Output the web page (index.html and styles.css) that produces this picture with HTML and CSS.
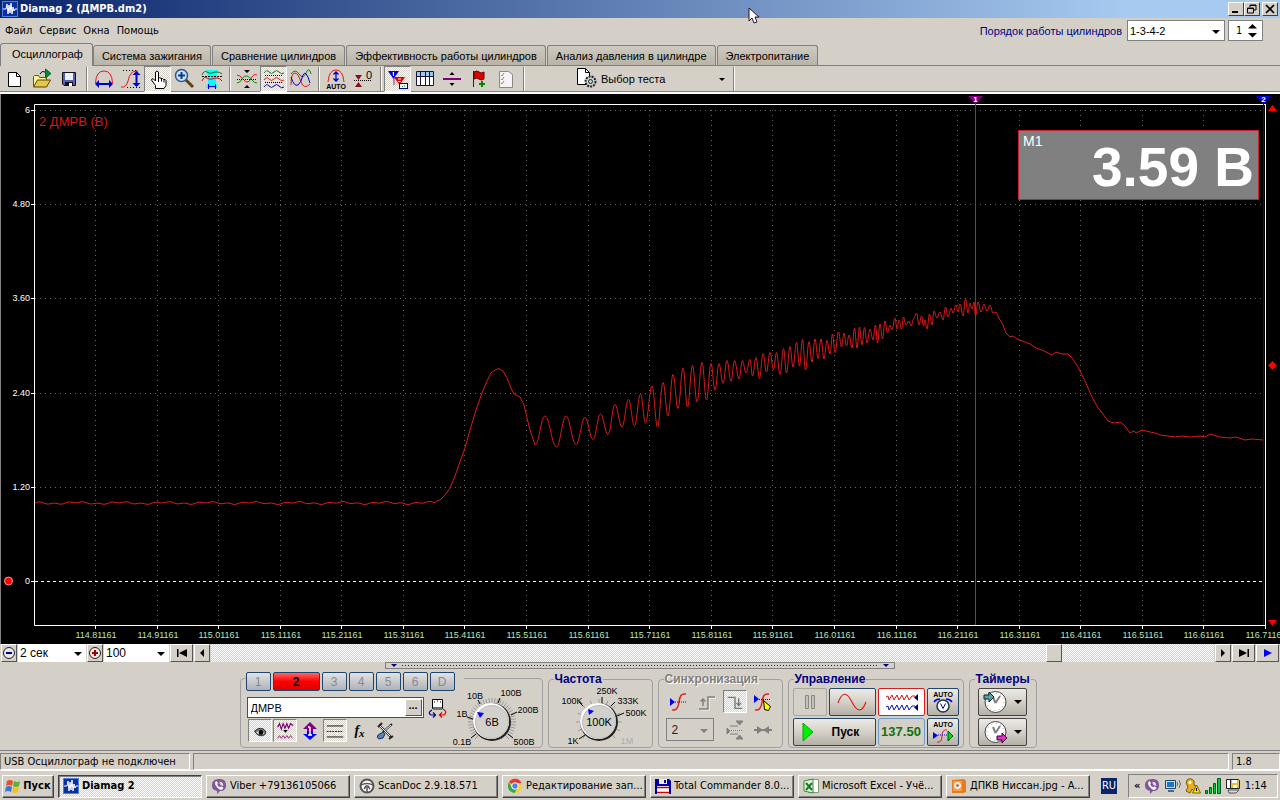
FILE: index.html
```html
<!DOCTYPE html>
<html lang="ru">
<head>
<meta charset="utf-8">
<title>Diamag 2 (ДМРВ.dm2)</title>
<link rel="stylesheet" href="styles.css">
</head>
<body>
<svg class="defs" aria-hidden="true">
  <symbol id="app" viewBox="0 0 16 16"><rect width="16" height="16" fill="#0a2fa0"/><rect x=".5" y=".5" width="15" height="15" fill="none" stroke="#4f7fe0"/><path d="M1 8h3l1-5 1 10 1-9 1 8 1-10 1 11 1-7 1 4 1-2h2" fill="none" stroke="#fff"/></symbol>
  <symbol id="viber" viewBox="0 0 16 16"><path d="M8 1c5 0 7 2 7 6s-2 6-6 6l-3 3v-3C2 12 1 10 1 7s2-6 7-6z" fill="#7d569c"/><path d="M4.500 4c1-1 2 0 2 1.500l-.5 1q1 2.500 3 3l1-.7q2 0 2 1.500c-1 2-3 1.500-5-.3S4 6 4.500 4zM8.500 4q3.500 0 3.500 4M8.500 5.500q2 .2 2 2" fill="#fff" stroke="#fff" stroke-width=".6"/></symbol>
  <symbol id="clock" viewBox="0 0 26 24"><circle cx="12.500" cy="12" r="10.500" fill="#fff" stroke="#444"/><circle cx="12.500" cy="12" r="8.500" fill="none" stroke="#999" stroke-dasharray="1 3.450"/><path d="M12.500 13L17 6M12.500 13L10 7" fill="none" stroke="#808080" stroke-width="2"/></symbol>
</svg>
<div class="app">
  <header class="title">
    <svg width="16" height="16"><use href="#app"/></svg>
    <h1>Diamag 2 (ДМРВ.dm2)</h1>
    <div class="winbtns">
      <button aria-label="Свернуть"><svg viewBox="0 0 12 10"><path d="M2 8h6" stroke="#000" stroke-width="2"/></svg></button><button aria-label="Восстановить"><svg viewBox="0 0 12 10"><path d="M4 3V1h6v5H8M4 1.500h6" fill="none" stroke="#000"/><path d="M1.500 4h6v5h-6zM1 4.500h7" fill="none" stroke="#000"/></svg></button><button class="close" aria-label="Закрыть"><svg viewBox="0 0 12 10"><path d="M2 1l8 8M10 1L2 9" stroke="#000" stroke-width="1.700"/></svg></button>
    </div>
    <svg class="cursor" viewBox="0 0 12 17"><path d="M1 1v13l3-3 2 5 3-1-2-5h4z" fill="#fff" stroke="#2a1030"/></svg>
  </header>
  <div class="menubar">
    <nav><a href="#">Файл</a><a href="#">Сервис</a><a href="#">Окна</a><a href="#">Помощь</a></nav>
    <label class="order" for="order">Порядок работы цилиндров</label>
    <span class="pick ordersel"><select id="order"><option>1-3-4-2</option></select></span>
    <span class="spin"><input aria-label="Цилиндр" value="1"><svg viewBox="0 0 9 14"><path d="M0 4.500L4.500 0 9 4.500zM0 9h9L4.500 13.500z"/></svg></span>
  </div>
  <div class="tabs">
    <button class="on">Осциллограф</button><button>Система зажигания</button><button>Сравнение цилиндров</button><button>Эффективность работы цилиндров</button><button>Анализ давления в цилиндре</button><button>Электропитание</button>
  </div>
  <div class="toolbar">
    <button aria-label="Новый"><svg viewBox="0 0 24 24"><path d="M5.500 5.500h8l4 4v10h-12z" fill="#fff" stroke="#000"/><path d="M13.500 5.500v4h4" fill="none" stroke="#000"/></svg></button>
    <button aria-label="Открыть"><svg viewBox="0 0 24 24"><path d="M3.500 19V9.500l1-1h4l1 2h7v3" fill="#fff79a" stroke="#665800"/><path d="M3.500 20l4-7h13l-4 7z" fill="#e6c646" stroke="#554400"/><path d="M10 7q2-4 5-2" fill="none" stroke="#000"/><path d="M15.500 2l5.500 4.500-5.500 4.500z" fill="#078c2b" stroke="#063"/></svg></button>
    <button aria-label="Сохранить"><svg viewBox="0 0 24 24"><path d="M5.500 5.500h13v13H7l-1.500-1.500z" fill="#5662b0" stroke="#111"/><path d="M8 6h8v7H8z" fill="#e8f0fa"/><path d="M8 15h8v4H8z" fill="#111"/><path d="M12 16h3v3h-3z" fill="#fff"/></svg></button>
    <i class="sep"></i>
    <button aria-label="Развёртка"><svg viewBox="0 0 24 24"><path d="M3.500 16Q4 4 12 4t8.500 12" fill="none" stroke="#e01818"/><path d="M5 17h14" stroke="#00c" stroke-width="2"/><path d="M3 17l4-4v8zM21 17l-4-4v8z" fill="#00c"/></svg></button>
    <button aria-label="Усиление"><svg viewBox="0 0 24 24"><path d="M2 20q5 1 7-6 2-10 8-10h2" fill="none" stroke="#e01818"/><path d="M4 3.500h15M8 20.500h14" stroke="#000" stroke-dasharray="1 2"/><path d="M17.500 6v13" stroke="#00c" stroke-width="2"/><path d="M17.500 4l4 4h-8zM17.500 20l4-4h-8z" fill="#00c"/></svg></button>
    <button class="down" aria-label="Рука"><svg viewBox="0 0 24 24"><path d="M9.500 21.500v-3l-4-5.500q0-2 2-1l2 2v-9q1.500-2 3 0v6q1.500-1 2.500.5 2-.5 2.500 1 2-.5 2.500 1v5l-2 3z" fill="#fff" stroke="#000"/><path d="M12.500 11v4M15.500 11.500v3M18 12.500v3" stroke="#000"/></svg></button>
    <button aria-label="Масштаб"><svg viewBox="0 0 24 24"><circle cx="8.500" cy="8.500" r="6" fill="#c8e4ff" stroke="#2b5590" stroke-width="1.500"/><path d="M5 8.500h7M8.500 5v7" stroke="#0b3b85" stroke-width="2"/><path d="M13 13l7 7" stroke="#5a4510" stroke-width="3"/></svg></button>
    <button aria-label="Автоподбор"><svg viewBox="0 0 24 24"><path d="M6 3h12l-2 7v6l2 5H6l2-5v-6z" fill="#0ff"/><path d="M2 8q2-5 5-3t5 1 5-1 5 2" fill="none" stroke="#0a820a"/><path d="M2 14q2-5 5-3t5 1 5-1 5 3" fill="none" stroke="#d00"/><path d="M2 9.500h20" stroke="#000" stroke-dasharray="2 1"/><path d="M8 19.500h8M8.500 17v5M15.500 17v5" stroke="#00c"/></svg></button>
    <i class="sep"></i>
    <button aria-label="Совместить"><svg viewBox="0 0 24 24"><path d="M2 8q3 0 6 4t5 3 4-5 5-2" fill="none" stroke="#e01818"/><path d="M2 16q3 0 5-4t5-3 5 4 5 3" fill="none" stroke="#148014"/><path d="M2 12.500h20" stroke="#000" stroke-dasharray="1 1"/><path d="M9 3h6l-3 3zM9 21h6l-3-3z"/></svg></button>
    <button class="down" aria-label="Разнести"><svg viewBox="0 0 24 24"><g fill="none"><path d="M2 6q2.500-4 5-1t5 0 5 0 5 1" stroke="#148014"/><path d="M2 13q2.500-4 5-1t5 0 5 0 5 1" stroke="#e01818"/><path d="M2 20q2.500-4 5-1t5 0 5 0 5 1" stroke="#00c"/><path d="M3 8.500h18M3 15.500h18" stroke="#000" stroke-dasharray="1 1"/></g></svg></button>
    <button aria-label="Наложить"><svg viewBox="0 0 24 24"><g fill="none"><path d="M2 7q4-6 8 0t7-1 5 1" stroke="#148014"/><path d="M2 18q0-12 4-12 3 0 6 9 3 8 9 2" stroke="#e01818"/><path d="M2 10q3 10 7 8 3-2 5-10 3-6 7 8" stroke="#00c"/></g></svg></button>
    <i class="sep"></i>
    <button aria-label="Автомасштаб"><svg viewBox="0 0 24 24"><path d="M4 15Q5 3 12 3t8 12" fill="none" stroke="#e01818"/><path d="M12 5v9M9.500 7.500L12 5l2.500 2.500M9.500 11.500L12 14l2.500-2.500" fill="none" stroke="#00c" stroke-width="1.300"/><text x="12" y="22" class="t7">AUTO</text></svg></button>
    <button aria-label="Установить ноль"><svg viewBox="0 0 24 24"><path d="M4 8h7l-3.500 5zM4 20h7l-3.500-5z" fill="#8b0e1a"/><path d="M3 13.500h18" stroke="#000" stroke-dasharray="1 1"/><text x="18" y="12" class="t11">0</text></svg></button>
    <i class="sep"></i>
    <button class="down" aria-label="Маркеры"><svg viewBox="0 0 24 24"><path d="M8 10h11l-5.500 8z" fill="#e00000"/><path d="M2 4h11l-5.500 8z" fill="#0000d0"/><path d="M7.500 5v4M6.500 6h1M12 12h3M12 14.500h3" stroke="#fff"/><path d="M8 10v8M14 18v3" stroke="#a02060"/><rect x="13.500" y="16.500" width="8" height="5" fill="#fff" stroke="#00008b"/><path d="M16 19.500h1M18 19h1" stroke="#080"/></svg></button>
    <button aria-label="Таблица"><svg viewBox="0 0 24 24"><path d="M3.500 4.500h17v14h-17z" fill="#fff" stroke="#151540"/><path d="M4 5h16v4H4z" fill="#9fc5e8"/><path d="M4 9.500h16M7.500 5v13M12.500 5v13M16.500 5v13" stroke="#151540"/></svg></button>
    <button aria-label="Уровень"><svg viewBox="0 0 24 24"><path d="M3 12h18" stroke="#800080" stroke-width="2"/><path d="M9.500 8h5L12 5zM9.500 16h5L12 19z"/></svg></button>
    <button aria-label="Добавить метку"><svg viewBox="0 0 24 24"><path d="M6.500 4v16" stroke="#222"/><path d="M7 5q3-2 5 0t5 0v7q-3 2-5 0t-5 0z" fill="#e00000" stroke="#600"/><path d="M12 17h6M15 14v6" stroke="#080" stroke-width="2"/></svg></button>
    <button aria-label="Отчёт"><svg viewBox="0 0 24 24"><path d="M5.500 4.500h9l4 3v13h-13z" fill="#f4f4f4" stroke="#888"/><path d="M7 8l1 1 2-3M7 12l1 1 2-3M7 16l1 1 2-3" fill="none" stroke="#888"/></svg></button>
    <i class="sep"></i>
    <button class="test"><svg viewBox="0 0 24 24"><path d="M1.500 1.500h8l4 4v12h-12z" fill="#fff" stroke="#000"/><path d="M9.500 1.500v4h4" fill="none" stroke="#000"/><circle cx="14.500" cy="14.500" r="5" fill="#d4d0c8" stroke="#223" stroke-width="2" stroke-dasharray="2 1"/><circle cx="14.500" cy="14.500" r="2" fill="none" stroke="#033"/></svg><span>Выбор теста</span><b class="arr"></b></button>
    <i class="sep"></i>
  </div>

  <svg class="chart" viewBox="0 94 1280 550" role="img" aria-label="2 ДМРВ (В)">
    <rect y="94" width="1280" height="550"/>
    <path d="M.5 94V644" stroke="#808080"/>
    <g id="grid" stroke="#666" stroke-dasharray="1 4"></g>
    <path d="M35 581.500H1265" stroke="#fff" stroke-dasharray="3 3"/>
    <path d="M1265.500 104V626M1265 104.500H34.500V625.500H1265" fill="none" stroke="#fff"/>
    <path id="signal" fill="none" stroke="#dc1a1a"/>
    <path d="M975.500 100V625" stroke="#8c2494"/>
    <path d="M1263.500 100V625" stroke="#0000f0"/>
    <path d="M968 96h15l-7.500 8z" fill="#800080"/><path d="M1256 96h15l-7.500 8z" fill="#0000e0"/>
    <text x="975.500" y="102" class="mk">1</text><text x="1263.500" y="102" class="mk">2</text>
    <path d="M1268 111h9l-4.500-6zM1268 620h9l-4.500 6zM1272.500 361l4.500 4.500-4.500 4.500-4.500-4.500z" fill="#f00"/>
    <circle cx="8.500" cy="581" r="4" fill="#f00" stroke="#f99"/>
    <text x="39" y="126" class="sig">2 ДМРВ (В)</text>
    <g id="labels"></g>
    <rect x="1018.500" y="130.500" width="240" height="69" fill="#808080" stroke="#c8202c"/>
    <text x="1023" y="146" class="m1">M1</text>
    <text x="1254" y="186" class="big">3.59 В</text>
  </svg>

  <div class="timebar">
    <button aria-label="Уменьшить"><svg viewBox="0 0 16 16"><circle cx="8" cy="8" r="5.500" fill="#e8e8f0" stroke="#222"/><path d="M5 8h6" stroke="#00007b" stroke-width="2"/></svg></button>
    <span class="pick w68"><select aria-label="Развёртка"><option>2 сек</option></select></span>
    <button aria-label="Увеличить"><svg viewBox="0 0 16 16"><circle cx="8" cy="8" r="5.500" fill="#f6e4e4" stroke="#222"/><path d="M5 8h6M8 5v6" stroke="#a00000" stroke-width="2"/></svg></button>
    <span class="pick w64"><select aria-label="Масштаб"><option>100</option></select></span>
    <button class="wide" aria-label="В начало"><svg viewBox="0 0 16 16"><path d="M3 4h1.500v8H3zM13 4v8L5 8z"/></svg></button>
    <button aria-label="Влево"><svg viewBox="0 0 16 16"><path d="M10 4v8L6 8z"/></svg></button>
    <input type="range" min="0" max="1000" value="846" aria-label="Прокрутка">
    <button aria-label="Вправо"><svg viewBox="0 0 16 16"><path d="M6 4v8l4-4z"/></svg></button>
    <button class="wide" aria-label="В конец"><svg viewBox="0 0 16 16"><path d="M11.500 4H13v8h-1.500zM3 4v8l8-4z"/></svg></button>
    <button class="wide" aria-label="Воспроизвести"><svg viewBox="0 0 16 16"><path d="M4 4v8l8-4z" fill="#00f"/></svg></button>
  </div>
  <div class="splitter"><b></b><i></i><b></b></div>

  <main class="panel">
    <section class="channel">
      <div class="chans"><button>1</button><button class="act">2</button><button>3</button><button>4</button><button>5</button><button>6</button><button>D</button></div>
      <div class="chanbody">
        <div>
          <div class="namerow"><span class="name"><input aria-label="Имя канала" value="ДМРВ"><button aria-label="Выбрать">...</button></span>
          <svg width="22" height="20" viewBox="0 0 22 20"><path d="M5.500 1.500h10v9h-10z" fill="#fff" stroke="#000"/><path d="M6 9h9v3H6z" fill="#687868"/><path d="M7 4h1M10 3h1M13 4h1" stroke="#000"/><path d="M5 12q-5 3-1 5h4M6 14.500L8.500 17 6 19.500" fill="none" stroke="#008" stroke-width="1.200"/><path d="M16 11q5 3 1 6h-4M15 14.500L12.500 17l2.500 2.500" fill="none" stroke="#d00" stroke-width="1.200"/></svg></div>
          <div class="tools">
            <button class="down" aria-label="Показать"><svg viewBox="0 0 24 24"><path d="M6 12q7-6 12 0 1 4-3 5-6 1-9-5z" fill="#777" stroke="#222"/><path d="M8 13.500q4-3 9 1-5 2-9-1z" fill="#fff"/><circle cx="13" cy="13.500" r="2.500"/></svg></button>
            <button class="down" aria-label="Фильтр"><svg viewBox="0 0 24 24"><path d="M4 8l2-4 2 6 2-6 2 5 2-5 2 5 2-5 3 2" fill="none" stroke="#800080" stroke-width="1.300"/><path d="M10 11h5l-2.500 3z"/><path d="M4 20l2-3 2 3 2-3 2 3 2-3 2 3 2-3 2 3" fill="none" stroke="#a01080"/></svg></button>
            <button aria-label="Смещение"><svg viewBox="0 0 24 24"><path d="M12 3l7 7h-4v3H9v-3H5z" fill="#800080"/><path d="M12 21l7-6h-4v-3H9v3H5z" fill="#00f"/><path d="M12 8v8M10 8h2M10 16h4" stroke="#fff" stroke-width="1.500"/></svg></button>
            <button class="down" aria-label="Линии"><svg viewBox="0 0 24 24"><path d="M3 6.500h18M3 18.500h18" stroke="#000"/><path d="M3 12.500h18" stroke="#000" stroke-dasharray="2 1"/></svg></button>
            <button class="fx" aria-label="Формула">f<small>x</small></button>
            <button aria-label="Настройка"><svg viewBox="0 0 24 24"><path d="M6 6l12 12M19 5l-9 8M5 8l4-4M16 20l4-3" stroke="#222" stroke-width="2"/><path d="M7 7l10 10M18 6l-7 6" stroke="#fff"/><path d="M10 13l-5 3q-2 3 1 4l4-1 2-4z" fill="#5b83b8" stroke="#235"/></svg></button>
          </div>
        </div>
        <svg class="dial" width="90" height="64" viewBox="452 684 90 64"><g class="ticks" data-c="494,722,19,24,7.5"></g><circle cx="494" cy="722" r="19" fill="#222"/><circle cx="493" cy="721" r="18" fill="#fff"/><circle cx="494" cy="722" r="16.500" class="knob"/><path d="M479 712l7 1-4 5z" fill="#00f"/><path d="M482 704l-2-4M500 703l2-5M513 715l6-3M475 719l-6-2M478 734l-5 4M510 734l5 4" stroke="#000"/><text class="kv" x="494" y="726">6В</text><g class="kl"><text x="477" y="699">10В</text><text x="513" y="696">100В</text><text x="530" y="713">200В</text><text x="464" y="717">1В</text><text x="464" y="745">0.1В</text><text x="526" y="745">500В</text></g></svg>
      </div>
    </section>
    <fieldset class="freq"><legend>Частота</legend>
      <svg width="96" height="64" viewBox="552 684 96 64"><g class="ticks" data-c="598,722,19,23,22.5"></g><circle cx="598" cy="722" r="19" fill="#222"/><circle cx="597" cy="721" r="18" fill="#fff"/><circle cx="598" cy="722" r="16.500" class="knob"/><path d="M587 709l6 2-5 4z" fill="#00f"/><path d="M601 703v-6M582 706l-4-4M610 706l4-4M616 716l7-3M584 735l-6 4" stroke="#000"/><text class="kv" x="598" y="726">100K</text><g class="kl"><text x="606" y="694">250K</text><text x="571" y="704">100K</text><text x="627" y="704">333K</text><text x="635" y="716">500K</text><text x="572" y="744">1K</text><text x="626" y="744" fill="#aaa">1M</text></g></svg>
    </fieldset>
    <fieldset class="sync" disabled><legend>Синхронизация</legend>
      <div class="syncgrid">
        <button aria-label="Фронт"><svg viewBox="0 0 24 24"><path d="M5 20q6 1 7-8t6-8h1" fill="none" stroke="#d22" stroke-width="1.500"/><path d="M8 12h12" stroke="#00f" stroke-dasharray="1 1"/><path d="M3 8v8l5-4z" fill="#00f"/></svg></button>
        <button aria-label="Нарастание"><svg viewBox="0 0 24 24"><path d="M5 20h9V8h7" fill="none" stroke="#fff"/><path d="M4 19h9V7h7M8 16V9M5.500 11.500L8 9l2.500 2.500" fill="none" stroke="#808080" stroke-width="1.500"/></svg></button>
        <button class="down" aria-label="Спад"><svg viewBox="0 0 24 24"><path d="M4 7h8v12h8M16 8v8M13.500 13l2.500 3 2.500-3" fill="none" stroke="#777" stroke-width="1.500"/></svg></button>
        <button aria-label="Ручной"><svg viewBox="0 0 24 24"><path d="M4 20q6 1 7-8t6-8h1" fill="none" stroke="#d22" stroke-width="1.500"/><path d="M8 9.500h12" stroke="#00f" stroke-dasharray="1 1"/><path d="M3 5v8l5-4z" fill="#00f"/><path d="M12.500 10.500l7 6-2 4-4-1z" fill="#ff0" stroke="#000"/></svg></button>
        <span class="pick"><select aria-label="Канал синхронизации"><option>2</option></select></span>
        <button aria-label="Уровень"><svg viewBox="0 0 24 24"><path d="M7 8h8M7 16h8M13 3h7l-3.500 4zM13 21h7l-3.500-4zM4 10v6l3-3z" fill="#808080" stroke="#808080"/><path d="M8 12.500h12" stroke="#808080" stroke-dasharray="1 1"/></svg></button>
        <button aria-label="Сжать"><svg viewBox="0 0 24 24"><path d="M3 12h18" stroke="#808080" stroke-width="2"/><path d="M6 8v8l6-4zM18 8v8l-6-4z" fill="#808080"/></svg></button>
      </div>
    </fieldset>
    <fieldset class="ctl"><legend>Управление</legend>
      <div class="ctlgrid">
        <button class="off" disabled aria-label="Пауза"><svg viewBox="0 0 24 24"><path d="M7.500 5.500h3v13h-3zM13.500 5.500h3v13h-3z" fill="#c4c0b8" stroke="#888"/></svg></button>
        <button aria-label="Синус"><svg width="34" height="24" viewBox="0 0 34 24"><path d="M3 13Q9-4 17 12t14 0" fill="none" stroke="#e01818" stroke-width="1.200"/></svg></button>
        <button class="sel" aria-label="Режим записи"><svg width="36" height="24" viewBox="0 0 36 24"><path d="M3 7l2-1 1 4 3-5 2 5 3-5 2 5 3-5 2 5 3-5 2 5 3-4h3" fill="none" stroke="#d11"/><path d="M3 17l2-1 1 4 3-5 2 5 3-5 2 5 3-5 2 5 3-5 2 5 3-4h3" fill="none" stroke="#11c"/><path d="M35 4v7l-4-3.500zM35 14v7l-4-3.500z" fill="#007"/></svg></button>
        <button aria-label="Авто вольты"><svg viewBox="0 0 24 24"><text class="t7" x="12" y="7">AUTO</text><circle cx="12" cy="16" r="6" fill="#fff" stroke="#234" stroke-width="1.500"/><path d="M9.500 13.500l2.500 5 2.500-5" fill="none" stroke="#00c"/><path d="M3 12q2-3 6-3M21 12q-2-3-6-3" fill="none" stroke="#00f" stroke-width="1.500"/></svg></button>
        <button class="start"><svg width="12" height="18" viewBox="0 0 12 18"><path d="M1 0v18l10-9z" fill="#00f000" stroke="#0a0"/></svg><span>Пуск</span></button>
        <output>137.50</output>
        <button aria-label="Авто синхронизация"><svg viewBox="0 0 24 24"><text class="t7" x="12" y="7">AUTO</text><path d="M6 22q5 1 5-6t5-6" fill="none" stroke="#d22"/><path d="M7 15h10" stroke="#00f" stroke-dasharray="1 1"/><path d="M2 12l5 3.500L2 19z" fill="#00f"/><path d="M17 11l5 5-5 5z" fill="#0d0" stroke="#050"/></svg></button>
      </div>
    </fieldset>
    <fieldset class="tim"><legend>Таймеры</legend>
      <button aria-label="Таймер запуска"><svg width="26" height="24" viewBox="0 0 26 24"><use href="#clock"/><path d="M1 5h5V2l5 5-5 5V9H1z" fill="#4fa8a8" stroke="#122"/></svg><b class="arr"></b></button>
      <button aria-label="Таймер остановки"><svg width="26" height="24" viewBox="0 0 26 24"><use href="#clock"/><path d="M14 16h5v-3l5 5-5 5v-3h-5z" fill="#e030c8" stroke="#303"/></svg><b class="arr"></b></button>
    </fieldset>
  </main>

  <div class="status"><span class="s1">USB Осциллограф не подключен</span><span class="s2"></span><span class="s3">1.8</span></div>
  <footer class="taskbar">
    <button class="go"><svg width="17" height="16" viewBox="0 0 17 16"><path d="M2 3q3-2 6 0L7 8Q4 6 1 8z" fill="#e8502a"/><path d="M9 3q3 2 6 0l-1 5q-3 2-6 0z" fill="#5bb22d"/><path d="M1 9q3-2 6 0l-1 5q-3-2-6 0z" fill="#3a74d8"/><path d="M8 9q3 2 6 0l-1 5q-3 2-6 0z" fill="#f4c020"/></svg>Пуск</button>
    <div class="tasks">
      <button class="cur"><svg><use href="#app"/></svg><span>Diamag 2</span></button>
      <button><svg><use href="#viber"/></svg><span>Viber +79136105066</span></button>
      <button><svg viewBox="0 0 16 16"><circle cx="8" cy="8" r="6.500" fill="#fff" stroke="#555" stroke-width="2"/><path d="M2 7q6-3 12 0M8 9v5M5 11l2-3h2l2 3" stroke="#555" stroke-width="1.500" fill="none"/></svg><span>ScanDoc 2.9.18.571</span></button>
      <button><svg viewBox="0 0 16 16"><circle cx="8" cy="8" r="7" fill="#fc3"/><path d="M8 8L2 4.300A7 7 0 0 1 14.500 5H8z" fill="#e33b2e"/><path d="M2 4.300A7 7 0 0 0 7.500 15L11 9.500 8 11 5 10z" fill="#2da94f"/><circle cx="8" cy="8" r="3.300" fill="#4285f4" stroke="#fff"/></svg><span>Редактирование зап...</span></button>
      <button><svg viewBox="0 0 16 16"><path d="M0 1h14l2 2v13H0z" fill="#0000a8"/><path d="M4 1h8v5H4z" fill="#eee"/><path d="M9 2h2v3H9z" fill="#0000a8"/><path d="M2 8h12v8H2z" fill="#fff"/><path d="M2 9.500h12M2 14.500h12" stroke="#c00" stroke-width="1.500"/></svg><span>Total Commander 8.0...</span></button>
      <button><svg viewBox="0 0 16 16"><path d="M5.500 1.500h10v13h-10z" fill="#fff" stroke="#7a9a7a"/><path d="M1 3l9-2v14l-9-2z" fill="#e4f4dc" stroke="#3a8a3a"/><path d="M3 5l6 7M9 5l-6 7" stroke="#1c7a2c" stroke-width="2"/></svg><span>Microsoft Excel - Учё...</span></button>
      <button><svg viewBox="0 0 16 16"><path d="M1 2l12-1 2 2v11l-3 1H1z" fill="#e87a1c"/><path d="M2 3h9v10H2z" fill="#f4a04c"/><circle cx="6.500" cy="7.500" r="3" fill="#f0e0d0" stroke="#fff"/><circle cx="6.500" cy="7.500" r="1.300" fill="#a63"/></svg><span>ДПКВ Ниссан.jpg - A...</span></button>
    </div>
    <span class="lang">RU</span>
    <div class="tray"><span class="chev">«</span>
      <svg><use href="#viber"/></svg>
      <svg viewBox="0 0 16 16"><path d="M.5 2.500h10v8H.5z" fill="#cde" stroke="#246"/><path d="M2 4h7v5H2z" fill="#1c74c8"/><path d="M3 13h6" stroke="#567" stroke-width="2"/><path d="M12 4q1.500 2 0 4M14 2q3 4 0 8" fill="none" stroke="#567"/></svg>
      <svg viewBox="0 0 16 16"><path d="M2 2q4-3 7 1v4l4 2-3 5-3-3-2 4-4-2 2-4Q0 5 2 2z" fill="#e8b020" stroke="#7a5800"/><circle cx="5" cy="4.500" r="1.500" fill="#fff"/><path d="M11.500 7l4 8h-8z" fill="#ffe000" stroke="#760"/><path d="M11.500 10v3" stroke="#000"/></svg>
      <svg viewBox="0 0 16 16"><path d="M.5 12.500h2v3h-2zM4.500 9.500h2v6h-2zM8.500 5.500h2v10h-2zM12.500.5h3v15h-3z" fill="#0c3" stroke="#053"/></svg>
      <svg viewBox="0 0 16 16"><path d="M1.500 1.500h9v9h-9z" fill="#fff" stroke="#222"/><path d="M5.500 1.500h8l1 1v8h-9z" fill="#e8c040" stroke="#222"/><path d="M7 2h5v3H7zM8 7h4v3H8z" fill="#fff"/><path d="M3 12h11l-3 3H4z" fill="#ddd" stroke="#555"/></svg>
      <time>1:14</time>
    </div>
  </footer>
</div>
<script src="chart.js"></script>
</body>
</html>
```

FILE: styles.css
```css
* { box-sizing: border-box; }
:root { --face: #d4d0c8; --check: repeating-conic-gradient(#fff 0 25%, #d4d0c8 0 50%) 0 0 / 2px 2px; --ui: "Liberation Sans", Arial, sans-serif; --tahoma: "DejaVu Sans Condensed", "DejaVu Sans", sans-serif; }
body { margin: 0; background: var(--face); color: #000; font: 11px/14px var(--ui); }
button, input, select, output { font: inherit; color: inherit; }
button { padding: 0; border: 0; background: none; display: flex; align-items: center; justify-content: center; }
a { color: inherit; text-decoration: none; }
.defs { display: none; }
.app { display: flex; flex-direction: column; min-height: 100vh; }

.title { display: flex; align-items: center; gap: 2px; height: 18px; padding: 0 2px; position: relative; color: #fff; background: linear-gradient(90deg, #0a246a, #a6caf0 88%); }
.title h1 { margin: 0; font: bold 11px/16px var(--tahoma); }
.winbtns { display: flex; margin-left: auto; }
.winbtns button { width: 16px; height: 14px; background: var(--face); border: 1px solid; border-color: #fff #404040 #404040 #fff; }
.winbtns svg { width: 12px; height: 10px; }
.winbtns .close { margin-left: 2px; }
.cursor { position: absolute; left: 748px; top: 7px; width: 12px; height: 17px; z-index: 2; }

.menubar { display: flex; align-items: center; height: 25px; padding: 0 17px 0 5px; font: 11px/14px var(--tahoma); }
.menubar nav { display: flex; gap: 7px; flex: 1; }
.order { font: 11px/14px var(--ui); color: #000080; margin-right: 5px; }
.pick { display: flex; position: relative; background: #fff; font: 12px/14px var(--ui); }
.pick select { appearance: none; flex: 1; min-width: 0; border: 0; padding: 0 2px; background: none; border-radius: 0; }
.pick::after { content: ""; position: absolute; right: 4px; top: 50%; border: 4px solid transparent; border-top-color: #000; border-bottom: 0; margin-top: -1px; }
.ordersel { width: 98px; height: 21px; border: 1px solid #808080; margin-right: 3px; }
.ordersel select { font-size: 11px; }
.spin { display: flex; align-items: center; width: 35px; height: 21px; padding: 0 5px; background: #fff; border: 1px solid #808080; }
.spin input { flex: 1; min-width: 0; border: 0; padding: 0 2px; background: none; }
.spin svg { width: 9px; height: 14px; }

.tabs { display: flex; align-items: flex-end; height: 23px; border-bottom: 1px solid #808080; }
.tabs button { height: 20px; padding: 0 8px; margin-right: 1px; border: 1px solid #808080; border-bottom: 0; border-radius: 3px 3px 0 0; background: linear-gradient(#cfcbc2, #b8b3a6); white-space: nowrap; }
.tabs .on { height: 23px; padding: 0 9px 2px 11px; margin: 0 0 -1px; background: var(--face); }

.toolbar { display: flex; align-items: center; height: 28px; padding-left: 1px; border-bottom: 2px solid #fff; box-shadow: inset 0 -1px #808080; }
.toolbar button { width: 27px; height: 26px; }
.toolbar svg, .tools svg, .syncgrid svg { width: 24px; height: 24px; }
.down { background: var(--check); border: 1px solid; border-color: #808080 #fff #fff #808080; }
.sep { width: 8px; height: 24px; background: linear-gradient(90deg, transparent 4px, #808080 4px 5px, #fff 5px 6px, transparent 6px); }
.toolbar .test { width: 202px; padding: 0 4px 0 49px; gap: 1px; justify-content: flex-start; }
.arr { border: 4px solid transparent; border-top-color: #000; border-bottom: 0; }
.test .arr { border-width: 3px; border-bottom: 0; margin-left: auto; }
.t7 { font: bold 7px "Liberation Sans", sans-serif; text-anchor: middle; }
.t11 { font: 11px "Liberation Sans", sans-serif; text-anchor: middle; }

.chart { display: block; width: 100%; font-family: "Liberation Sans", sans-serif; }
.mk { font-size: 8px; font-weight: bold; fill: #fff; text-anchor: middle; }
.sig { font-size: 13px; fill: #d01c1c; }
.m1 { font-size: 14px; fill: #fff; }
.big { font-size: 55px; font-weight: bold; fill: #fff; text-anchor: end; }
.yl { font-size: 9px; fill: #fff; text-anchor: end; }
.xl { font-size: 9px; fill: #b8e4b4; text-anchor: middle; }

.timebar { display: flex; height: 18px; padding: 0 1px; gap: 1px; }
.timebar button { width: 16px; background: var(--face); border: 1px solid; border-color: #fff #555 #555 #fff; }
.timebar svg { width: 16px; height: 16px; flex: none; }
.timebar .wide { width: 23px; }
.w68 { width: 68px; }
.w64 { width: 65px; }
.timebar input { appearance: none; flex: 1; min-width: 0; height: 18px; margin: 0; background: var(--check); }
.timebar input::-webkit-slider-thumb { appearance: none; width: 16px; height: 18px; background: var(--face); border: 1px solid; border-color: #fff #555 #555 #fff; }
.splitter { display: flex; align-items: center; gap: 5px; width: 510px; height: 7px; margin: 0 auto; padding: 0 5px; border: 1px solid #808080; }
.splitter b { border: 3px solid transparent; border-top-color: #000080; border-bottom: 0; }
.splitter i { flex: 1; height: 1px; background: repeating-linear-gradient(90deg, #223 0 1px, transparent 1px 3px); }

.panel { display: flex; justify-content: center; align-items: flex-start; gap: 5px; padding: 3px 4px 0 0; height: 81px; flex: 1; border-bottom: 1px solid #808080; }
fieldset, .channel { margin: 0; border: 1px solid #a0a0a0; border-radius: 4px; }
fieldset { height: 76px; min-width: 0; padding: 0 4px; }
legend { padding: 0 1px; margin-left: 1px; font: bold 12px/14px var(--ui); color: #000080; }
.channel { width: 303px; height: 70px; margin-top: 6px; padding: 0 2px 0 5px; }
.chans { display: flex; gap: 2px; width: 218px; margin-top: -7px; background: var(--face); position: relative; z-index: 1; font-size: 12px; }
.chans button { width: 25px; height: 19px; border: 1px solid #1c4670; border-radius: 2px; color: #868a90; background: linear-gradient(#e2e2e2, #aeb2b8); }
.chans .act { width: 47px; background: linear-gradient(#f66, #f00 50%, #d00); color: #000; font-weight: bold; }
.chanbody { display: flex; justify-content: space-between; }
.dial { margin-top: -7px; }
.namerow { display: flex; align-items: center; gap: 3px; padding: 6px 0 0 1px; }
.name { display: flex; width: 177px; height: 21px; padding: 1px; border: 1px solid #c81818; background: #fff; }
.name input { flex: 1; min-width: 0; border: 0; padding: 0 2px; background: none; }
.name button { width: 17px; padding-bottom: 5px; font-weight: bold; background: var(--face); border: 1px solid; border-color: #fff #555 #555 #fff; }
.tools { display: flex; padding: 1px 0 0 2px; gap: 1px; }
.tools button { width: 24px; height: 23px; }
.fx { font: italic bold 14px/16px "Liberation Serif", serif; }
.fx small { font-size: 11px; padding-top: 4px; }
.knob { fill: #d2d0cb; stroke: #bbb; }
.kv { font-size: 11px; text-anchor: middle; }
.kl { font-size: 9px; text-anchor: middle; }
.ticks { stroke: #999; }
.freq { width: 105px; }
.freq svg { display: block; margin-top: -2px; }
.sync { width: 125px; }
.sync legend { color: #808080; text-shadow: 1px 1px #fff; }
.syncgrid { display: grid; grid-template-columns: repeat(4, 28px); gap: 5px 0; padding: 4px 0 0 2px; }
.syncgrid button { width: 24px; height: 23px; justify-self: center; }
.syncgrid .pick { grid-column: span 2; width: 48px; height: 23px; margin-left: 1px; background: none; border: 1px solid #808080; }
.syncgrid .pick select { padding: 0 5px; opacity: 1; color: #222; }
.syncgrid .pick::after { right: 5px; border-top-color: #808080; }
.ctl { width: 176px; }
.ctlgrid { display: grid; grid-template-columns: 34px 47px 47px 32px; grid-auto-rows: 28px; gap: 2px; padding-top: 2px; }
.ctlgrid button, .tim button { border: 1px solid #234668; border-radius: 2px; background: linear-gradient(#eceae6, #d4d0c8 50%, #b4b0a8); }
.ctlgrid svg { flex: none; }
.ctlgrid button svg:not([width]) { width: 24px; height: 24px; }
.ctlgrid .off { border-color: #aaa69e; background: none; }
.ctlgrid .sel { border-color: #d81c1c; background: #fff; }
.ctlgrid .start { grid-column: span 2; justify-content: flex-start; padding-left: 8px; gap: 18px; font-weight: bold; font-size: 12px; }
.ctlgrid output { display: flex; align-items: center; justify-content: center; border: 1px solid #6d9cc8; border-radius: 3px; font: bold 13px/16px var(--ui); color: #107010; }
.tim { width: 68px; padding: 0 8px; }
.tim legend { margin-left: -3px; }
.tim button { width: 49px; height: 28px; margin-top: 2px; gap: 5px; border-color: #444; }

.status { display: flex; gap: 3px; height: 19px; padding: 2px 0 0; font: 11px/14px var(--tahoma); }
.status span { border: 1px solid; border-color: #808080 #fff #fff #808080; padding: 1px 3px; }
.s1 { width: 190px; white-space: nowrap; }
.s2 { flex: 1; }
.s3 { width: 48px; }
.taskbar { display: flex; align-items: center; gap: 4px; height: 30px; padding: 2px 2px 1px; border-top: 1px solid #fff; font: 11px/14px var(--tahoma); }
.taskbar button { height: 23px; border: 1px solid; border-color: #fff #404040 #404040 #fff; box-shadow: inset -1px -1px #808080; }
.taskbar .go { width: 52px; gap: 1px; font-weight: bold; }
.tasks { display: flex; flex: 1; min-width: 0; gap: 4px; }
.tasks button { flex: 1; min-width: 0; padding: 0 1px 0 4px; gap: 3px; justify-content: flex-start; white-space: nowrap; }
.tasks span { overflow: hidden; }
.tasks svg, .tray svg { width: 16px; height: 16px; flex: none; }
.taskbar .cur { background: var(--check); border-color: #404040 #fff #fff #404040; box-shadow: inset 1px 1px #808080; font-weight: bold; }
.lang { margin: 0 7px 0 7px; padding: 1px; background: #0a246a; color: #fff; }
.tray { display: flex; align-items: center; justify-content: space-between; width: 150px; height: 24px; padding: 0 10px 0 5px; border: 1px solid; border-color: #808080 #fff #fff #808080; }
.chev { font-weight: bold; }
```

FILE: chart.js
```js
const NS = 'http://www.w3.org/2000/svg';
function add(parent, tag, attrs, text) {
  const el = document.createElementNS(NS, tag);
  for (const k in attrs) el.setAttribute(k, attrs[k]);
  if (text) el.textContent = text;
  parent.appendChild(el);
}

const grid = document.getElementById('grid');
const labels = document.getElementById('labels');
[['6', 110], ['4.80', 204], ['3.60', 298], ['2.40', 393], ['1.20', 487], ['0', 581]].forEach(([t, y]) => {
  if (t !== '0') add(grid, 'path', { d: `M35 ${y + 0.5}H1265` });
  add(labels, 'path', { d: `M31 ${y + 0.5}h4`, stroke: '#fff' });
  add(labels, 'text', { x: 30, y: y + 3, class: 'yl' }, t);
});
for (let i = 0; i < 20; i++) {
  const x = Math.round(95 + i * 61.58);
  add(grid, 'path', { d: `M${x + 0.5} 110V625` });
  add(labels, 'path', { d: `M${x + 0.5} 625v4`, stroke: '#fff' });
  add(labels, 'text', { x: x + 1, y: 638, class: 'xl' }, (114.81161 + i * 0.1).toFixed(5));
}

// Idle level, then the rising edge of the first pulse.
let d = 'M35 503';
for (let x = 37; x < 436; x += 2) {
  d += `L${x} ${(503 + Math.sin(x / 7) * 0.8 + Math.sin(x / 2.3) * 0.7).toFixed(1)}`;
}
[436,501.5,440,500,445,495,450,488,455,476,462,456,465,448,470,430,476,410,482,393,487,381,491,373,495,370,499,368.5,503,371,507,378,511,388,514,394,520,397,524,405,528,422,530,430]
  .forEach((v, i) => { d += i % 2 ? ` ${v}` : `L${v}`; });

// Alternating troughs and peaks of the oscillation.
const ext = [535,445,545,416,556.5,447,566,416,576,444.5,585,417.5,593,439.5,600.5,414,608,434.5,615,404.5,622,427,628.5,399.5,634.5,426,640.5,394,645.5,423,652,386,657.5,427,663,382.5,668,416,673,374.5,678,408.5,683,368,687.5,407,692.5,365.5,697,402,702,362.5,706.5,400,711,363.5,715,390.5,719,363.5,723,383.5,727,360.5,731,381.5,734.5,360.5,739,379,742.5,360.5,746,373,750,359.5,752.5,376,756,357.5,759.5,378.5,763,353.5,766.5,372,770,352.5,773.5,369.5,776.5,352.5,780,374.5,783.5,348.5,786.5,373,790,346.5,793,367,796.5,342.5,799.5,366,802.5,339.5,805.5,370,809,341.5,812,362,815,339,818,358.5,821,339,824,359,827,340.5,830,354,832.5,334,835,352.5,838.5,332,841.5,347,844,333,846.5,346,849,335,852,348,854.5,328,857,348,859.5,327,862,345,864.5,327.5,867,343,870,329,873,340,875.5,325,877.5,343,880,324,882.5,339,885,321,887.5,333,890,325,892,330,895,318,897,329,899,320,901.5,329,903.5,317,906,325,909,321,911,326,914,318,916.5,313,919,325,921.5,316,923.5,326,925,320,927,329,929.5,314,932,325,934,311,937,318,940,312,943,320,945.5,307,948,317,951,308,953,313,956,305,958,312,960,304,963,316,965.5,299,968,313,970,303,972,309,974,302,975.5,316,978,302,981,312,984,304,987,311,990,305,993,313,996,312];
let px = 530, py = 430;
for (let i = 0; i < ext.length; i += 2) {
  const [x, y] = [ext[i], ext[i + 1]];
  const h = (x - px) * 0.4;
  d += i ? `C${px + h} ${py} ${x - h} ${y} ${x} ${y}` : `L${x} ${y}`;
  px = x; py = y;
}

// Falling edge and settled level.
const tail = [1000,320,1003,325,1006,333,1010,337,1013,336,1017,339,1025,342,1030,344,1036,348,1042,350,1048,353,1052,355,1056,352,1062,354,1068,354,1073,359,1078,367,1085,381,1092,397,1098,408,1103,414,1108,421,1114,423,1120,422,1125,426,1130,433,1134,431,1136,433,1142,430,1150,432,1155,433,1160,435,1168,436,1175,437,1182,436,1190,437,1200,436,1205,437,1210,434,1220,437,1230,438,1236,437,1245,440,1252,439,1263,440];
for (let i = 0; i < tail.length; i += 2) d += `L${tail[i]} ${tail[i + 1]}`;
document.getElementById('signal').setAttribute('d', d);

// Scale marks round the rotary knobs.
document.querySelectorAll('.ticks').forEach(g => {
  const [cx, cy, r1, r2, step] = g.dataset.c.split(',').map(Number);
  for (let a = 135; a <= 405; a += step) {
    const c = Math.cos(a * Math.PI / 180), s = Math.sin(a * Math.PI / 180);
    add(g, 'path', { d: `M${cx + c * r1} ${cy + s * r1}L${cx + c * r2} ${cy + s * r2}` });
  }
});
```
